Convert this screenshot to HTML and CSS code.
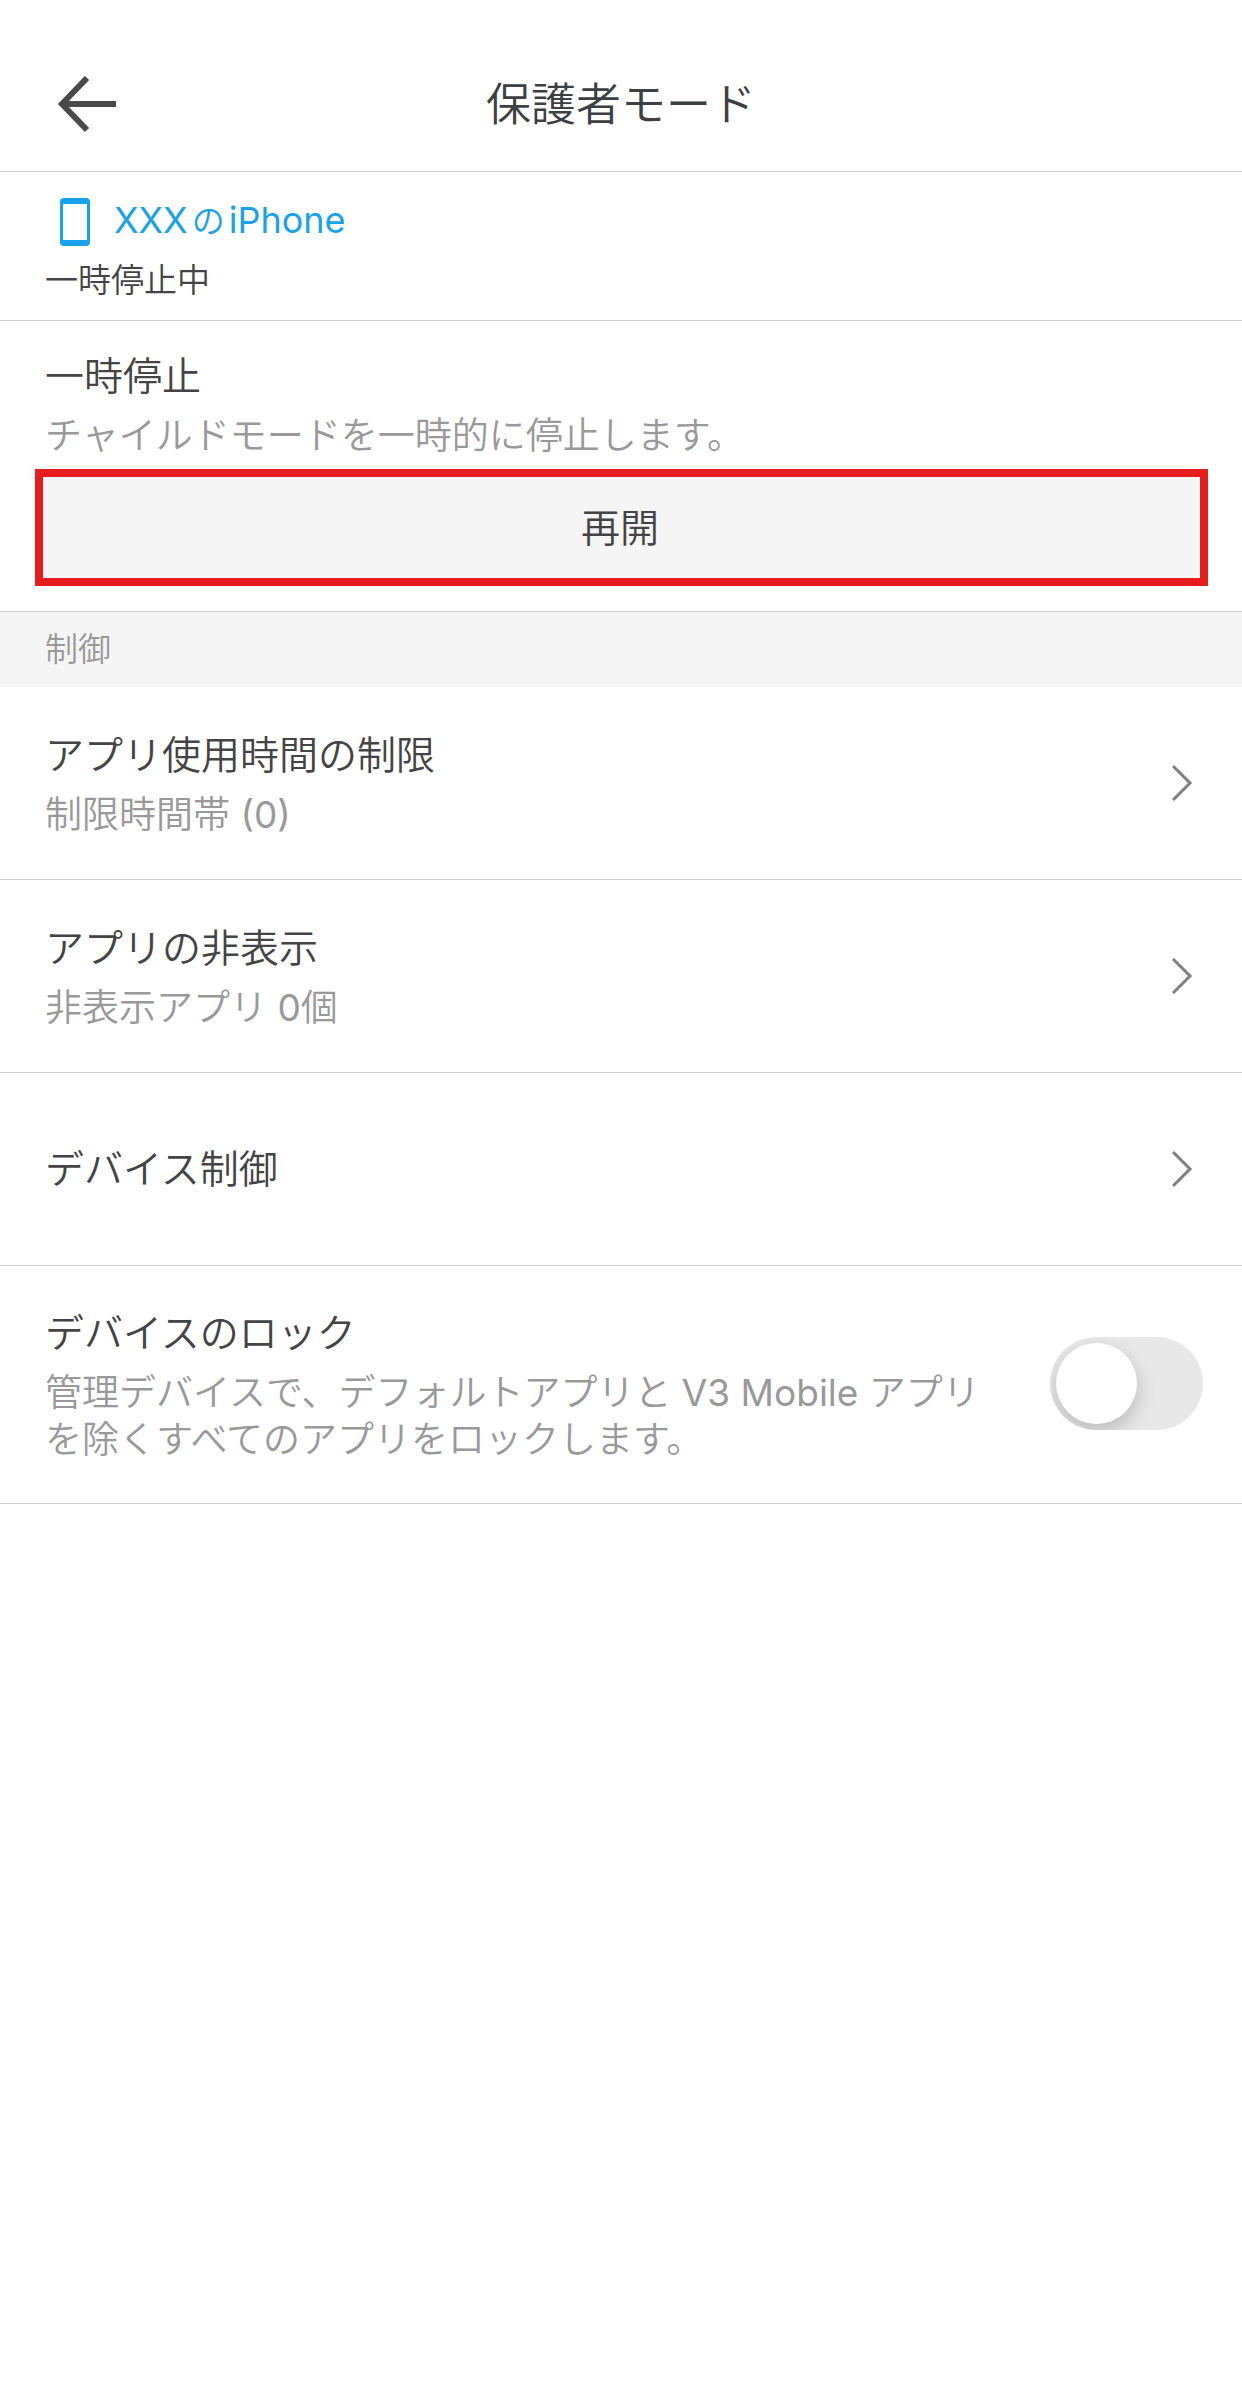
FILE: index.html
```html
<!DOCTYPE html>
<html lang="ja">
<head>
    <meta charset="UTF-8">
    <meta name="viewport" content="width=device-width, initial-scale=1.0">
    <title>保護者モード</title>
    <link rel="stylesheet" href="styles.css">
</head>
<body>
    <header class="header">
        <button type="button" class="back-btn" aria-label="戻る">
            <svg width="60" height="58" viewBox="0 0 60 58" fill="none" stroke="#4a4a4a" stroke-width="6">
                <path d="M30 2L5 28L30 54M5 28H59"/>
            </svg>
        </button>
        <h1>保護者モード</h1>
    </header>

    <main>
        <section class="device">
            <div class="device-name">
                <svg width="30" height="48" viewBox="0 0 30 48">
                    <path fill="#18a2ec" fill-rule="evenodd" d="M4 0H26Q30 0 30 4V44Q30 48 26 48H4Q0 48 0 44V4Q0 0 4 0ZM3 6V42H27V6Z"/>
                </svg>
                <p><span class="latin">XXX</span><span class="particle">の</span><span class="latin">iPhone</span></p>
            </div>
            <p class="status">一時停止中</p>
        </section>

        <section class="pause">
            <h2>一時停止</h2>
            <p class="desc">チャイルドモードを一時的に停止します。</p>
            <div class="highlight">
                <button type="button" class="resume-btn">再開</button>
            </div>
        </section>

        <h3 class="group-title">制御</h3>

        <a class="row" href="#">
            <div class="row-text">
                <h2>アプリ使用時間の制限</h2>
                <p class="desc">制限時間帯 <span class="latin">(0)</span></p>
            </div>
            <svg class="chevron" width="22" height="38" viewBox="0 0 22 38"><path d="M2 2L19 19L2 36"/></svg>
        </a>
        <a class="row" href="#">
            <div class="row-text">
                <h2>アプリの非表示</h2>
                <p class="desc">非表示アプリ <span class="latin">0</span>個</p>
            </div>
            <svg class="chevron" width="22" height="38" viewBox="0 0 22 38"><path d="M2 2L19 19L2 36"/></svg>
        </a>
        <a class="row" href="#">
            <div class="row-text">
                <h2>デバイス制御</h2>
            </div>
            <svg class="chevron" width="22" height="38" viewBox="0 0 22 38"><path d="M2 2L19 19L2 36"/></svg>
        </a>
        <div class="row lock-row">
            <label class="row-text" for="deviceLock">
                <span class="row-title">デバイスのロック</span>
                <span class="desc">管理デバイスで、デフォルトアプリと <span class="latin">V3 Mobile</span> アプリを除くすべてのアプリをロックします。</span>
            </label>
            <input type="checkbox" class="toggle" id="deviceLock" role="switch">
        </div>
    </main>
</body>
</html>
```

FILE: styles.css
```css
* {
    box-sizing: border-box;
}
body {
    margin: 0;
    background-color: #fff;
    color: #444;
    font-family: Inter, "Noto Sans CJK JP", sans-serif;
    font-weight: 350;
}
h1, h2, h3, p {
    margin: 0;
    font-weight: inherit;
}
button {
    border: none;
    padding: 0;
    color: inherit;
    font: inherit;
    cursor: pointer;
}
.latin {
    font-weight: 400;
}

/* Header */
.header {
    display: grid;
    grid-template-columns: 1fr auto 1fr;
    align-items: center;
    padding: 39px 57px 0;
    height: 172px;
    border-bottom: 1px solid #d0d0d0;
}
.header h1 {
    color: #3c4042;
    font-size: 45px;
    line-height: 60px;
}
.back-btn {
    width: 60px;
    height: 58px;
    background: none;
}
.back-btn svg {
    display: block;
}

/* Device info */
.device {
    padding: 21px 45px 11px;
    border-bottom: 1px solid #d0d0d0;
}
.device-name {
    display: flex;
    align-items: center;
    gap: 24px;
    height: 58px;
    padding-left: 15px;
    color: #18a2ec;
    font-size: 36px;
    line-height: 48px;
}
.device-name p {
    padding-bottom: 4px;
}
.particle {
    padding: 0 4px;
    font-size: 33px;
}
.status {
    font-size: 33px;
    line-height: 58px;
}

/* Shared text */
h2, .row-title {
    display: block;
    font-size: 39px;
    line-height: 60px;
}
.desc {
    display: block;
    color: #999;
    font-size: 37px;
    line-height: 47px;
}
h2 + .desc, .row-title + .desc {
    margin-top: 6px;
}

/* Pause */
.pause {
    padding: 25px 34px 25px 35px;
    border-bottom: 1px solid #d0d0d0;
}
.pause h2, .pause .desc {
    padding-left: 10px;
}
.highlight {
    margin-top: 10px;
    padding-right: 3px;
    border: 8px solid #e71c1c;
}
.resume-btn {
    display: block;
    width: 100%;
    height: 101px;
    padding-bottom: 5px;
    background-color: #f5f5f5;
    font-size: 39px;
}

.group-title {
    padding: 0 45px;
    background-color: #f5f5f5;
    color: #999;
    font-size: 33px;
    line-height: 75px;
}

/* List rows */
.row {
    display: flex;
    align-items: center;
    justify-content: space-between;
    min-height: 193px;
    padding: 0 49px 0 45px;
    border-bottom: 1px solid #d0d0d0;
    color: inherit;
    text-decoration: none;
}
.row h2 + .desc {
    margin-bottom: 4px;
}
.chevron {
    fill: none;
    stroke: #808080;
    stroke-width: 3;
}
.lock-row {
    gap: 56px;
    padding: 37px 39px 40px 45px;
}
.toggle {
    flex: none;
    appearance: none;
    width: 153px;
    height: 93px;
    margin: 0;
    padding: 6px;
    border-radius: 47px;
    background-color: #e8e8e8;
    overflow: hidden;
    cursor: pointer;
}
.toggle::before {
    content: "";
    display: block;
    width: 81px;
    height: 81px;
    border-radius: 50%;
    background-color: #fff;
    box-shadow: 0 8px 20px rgba(0,0,0,0.2);
}
.toggle:checked {
    background-color: #18a2ec;
}
.toggle:checked::before {
    margin-left: auto;
}
```
